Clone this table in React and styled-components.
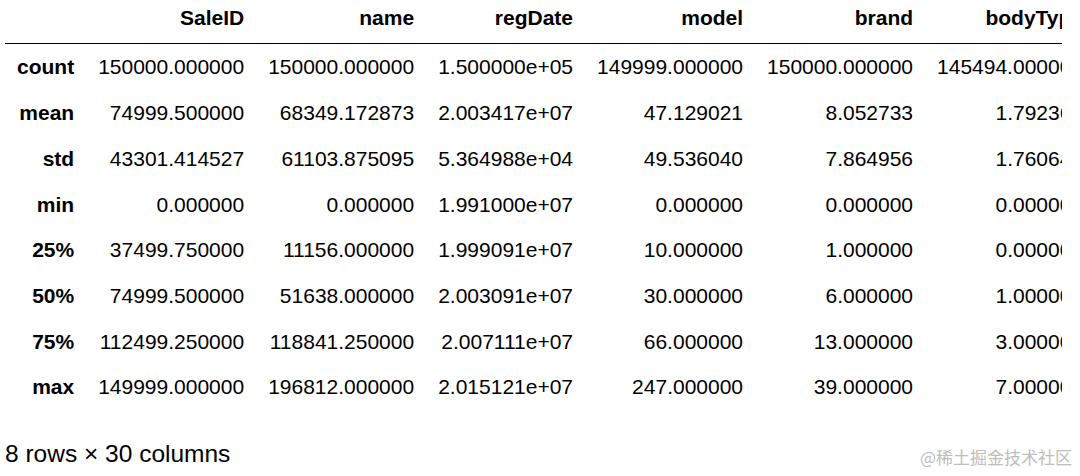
import React from 'react';
import styled, { createGlobalStyle } from 'styled-components';

const GlobalStyle = createGlobalStyle`
  html, body {
    margin: 0;
    padding: 0;
    background: #fff;
    overflow: hidden;
  }
  body {
    font-family: "Liberation Sans", Arial, sans-serif;
    color: #000;
  }
`;

const Page = styled.div`
  position: relative;
  width: 1080px;
  height: 476px;
  padding-left: 5px;
  box-sizing: border-box;
  overflow: hidden;
`;

const TableClip = styled.div`
  width: 1057px;
  overflow: hidden;
`;

const Table = styled.table`
  border-collapse: collapse;
  border-spacing: 0;
  font-size: 21px;
  line-height: 25.2px;
  white-space: nowrap;
`;

const HeadCell = styled.th`
  text-align: right;
  font-weight: bold;
  padding: 5px 12px 13px;
  border-bottom: 1px solid #000;
`;

const IndexCell = styled.th`
  text-align: right;
  font-weight: bold;
  padding: 10.25px 12px;
`;

const Cell = styled.td`
  text-align: right;
  padding: 10.25px 12px;
`;

const Shape = styled.p`
  margin: 30px 0 0;
  font-size: 24.5px;
  line-height: 28px;
`;

const Watermark = styled.span`
  position: absolute;
  right: 8px;
  bottom: 8px;
  font-family: "Noto Sans CJK SC", "Liberation Sans", sans-serif;
  font-size: 17px;
  line-height: 22px;
  color: #bdbdbd;
`;

const columns = ['SaleID', 'name', 'regDate', 'model', 'brand', 'bodyType', 'fuelType', 'gearbox'];

const rows = [
  ['count', ['150000.000000', '150000.000000', '1.500000e+05', '149999.000000', '150000.000000', '145494.000000', '141320.000000', '144019.000000']],
  ['mean', ['74999.500000', '68349.172873', '2.003417e+07', '47.129021', '8.052733', '1.792369', '0.375842', '0.224943']],
  ['std', ['43301.414527', '61103.875095', '5.364988e+04', '49.536040', '7.864956', '1.760640', '0.548677', '0.417546']],
  ['min', ['0.000000', '0.000000', '1.991000e+07', '0.000000', '0.000000', '0.000000', '0.000000', '0.000000']],
  ['25%', ['37499.750000', '11156.000000', '1.999091e+07', '10.000000', '1.000000', '0.000000', '0.000000', '0.000000']],
  ['50%', ['74999.500000', '51638.000000', '2.003091e+07', '30.000000', '6.000000', '1.000000', '0.000000', '0.000000']],
  ['75%', ['112499.250000', '118841.250000', '2.007111e+07', '66.000000', '13.000000', '3.000000', '1.000000', '0.000000']],
  ['max', ['149999.000000', '196812.000000', '2.015121e+07', '247.000000', '39.000000', '7.000000', '6.000000', '1.000000']],
];

export default function App() {
  return (
    <>
      <GlobalStyle />
      <Page>
        <TableClip>
          <Table>
            <thead>
              <tr>
                <HeadCell />
                {columns.map((c) => (
                  <HeadCell key={c}>{c}</HeadCell>
                ))}
              </tr>
            </thead>
            <tbody>
              {rows.map(([label, values]) => (
                <tr key={label}>
                  <IndexCell>{label}</IndexCell>
                  {values.map((v, i) => (
                    <Cell key={i}>{v}</Cell>
                  ))}
                </tr>
              ))}
            </tbody>
          </Table>
        </TableClip>
        <Shape>8 rows × 30 columns</Shape>
        <Watermark>@稀土掘金技术社区</Watermark>
      </Page>
    </>
  );
}
